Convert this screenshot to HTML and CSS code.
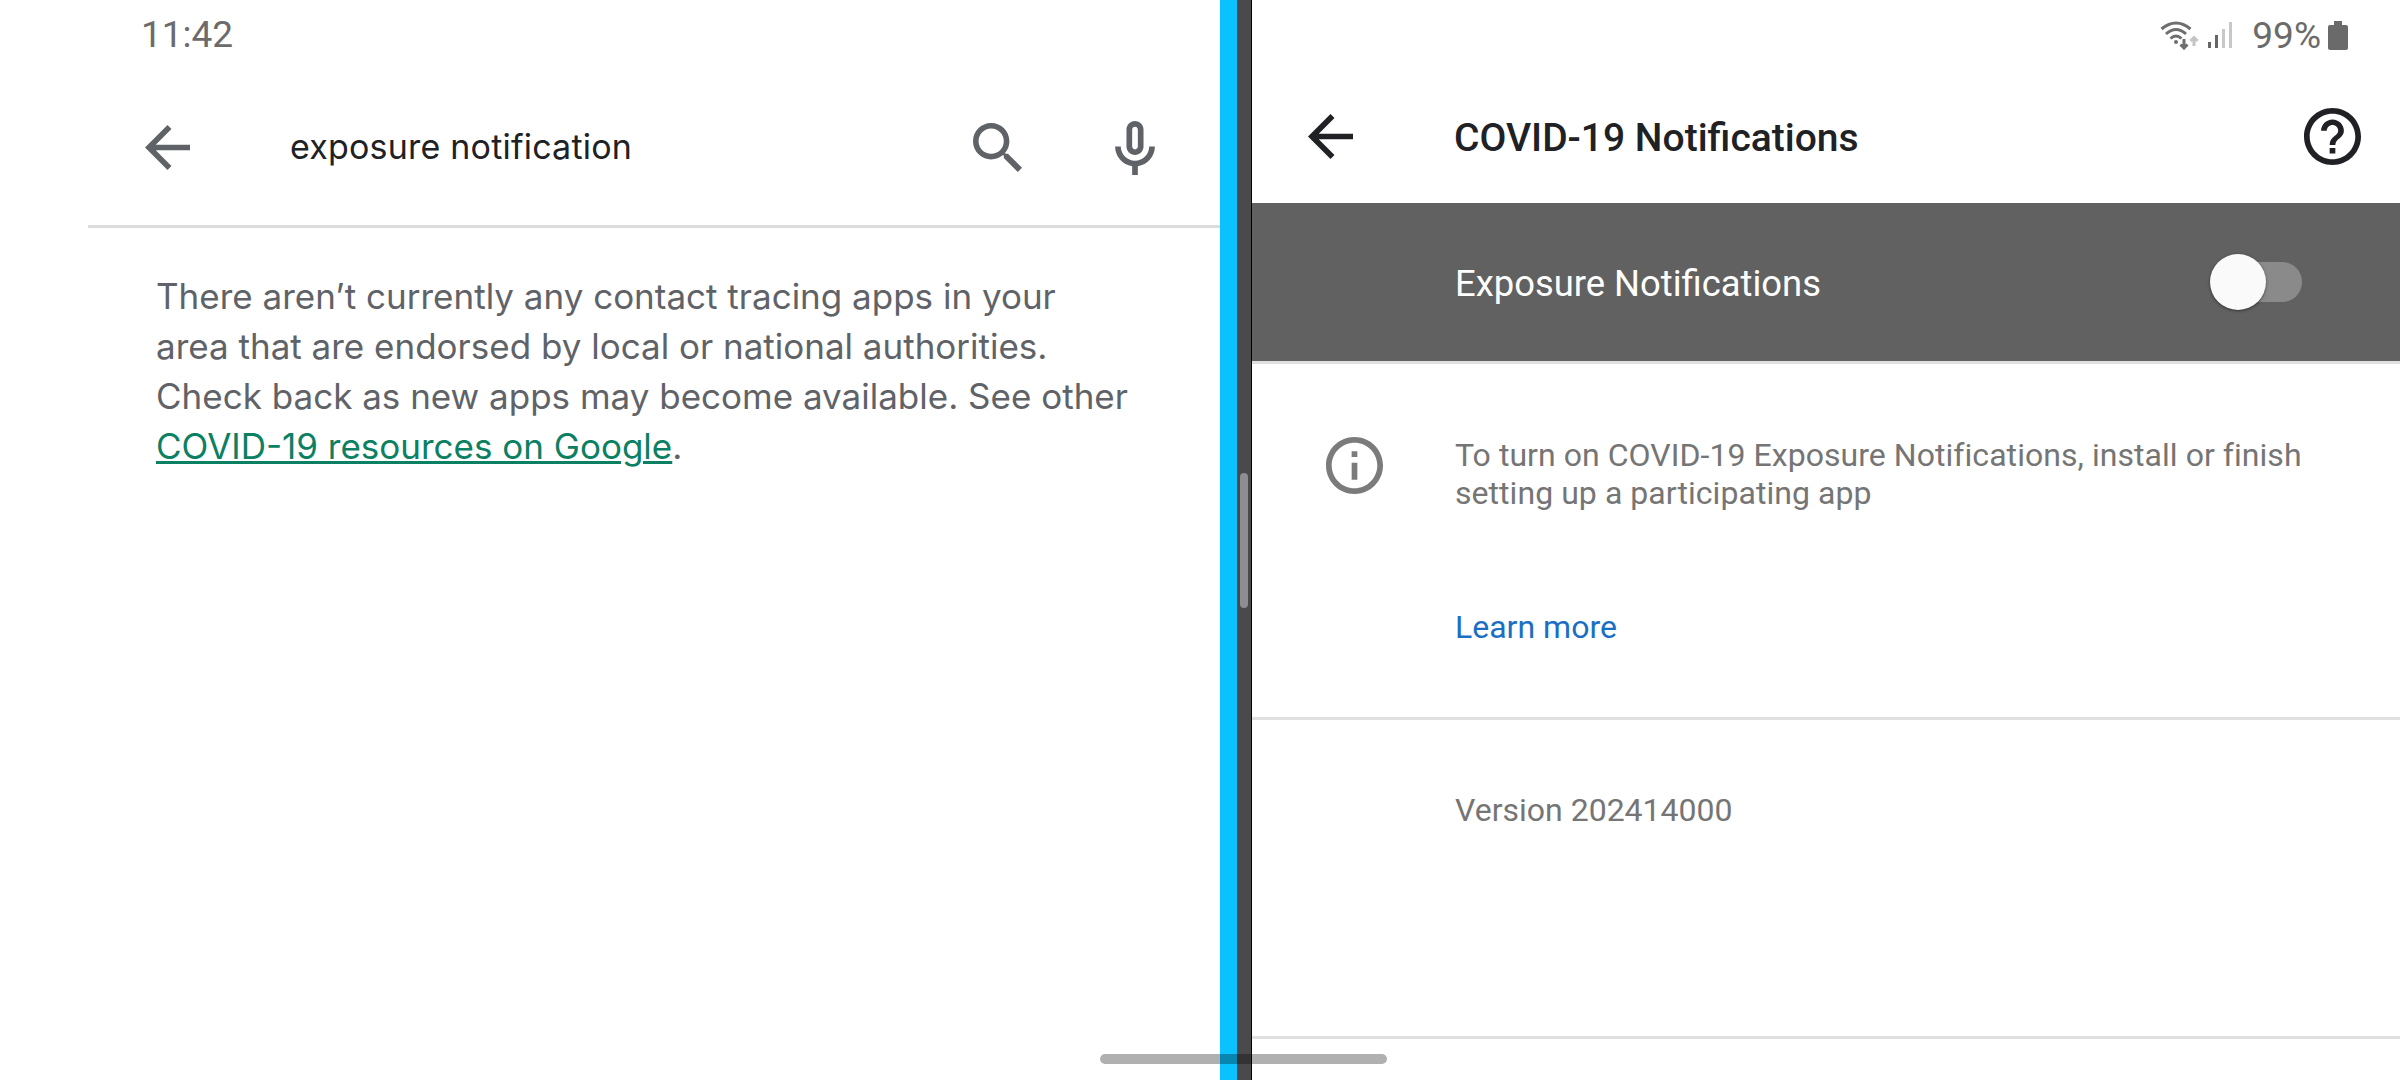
FILE: index.html
```html
<!DOCTYPE html>
<html lang="en">
<head>
  <meta charset="UTF-8" />
  <title>COVID-19 Notifications</title>
  <link rel="stylesheet" href="styles.css">
</head>
<body>

<div class="screen">
  <!-- left window: search -->
  <div class="left-pane">
    <div class="clock">11:42</div>
    <div class="search-bar">
      <svg class="icon-back-grey" viewBox="4 4 16 16"><path d="M20 11H7.83l5.59-5.59L12 4l-8 8 8 8 1.41-1.41L7.83 13H20v-2z"/></svg>
      <span class="search-text">exposure notification</span>
      <svg class="icon-search" viewBox="3 3 17.5 17.5"><path d="M15.5 14h-.79l-.28-.27C15.41 12.59 16 11.11 16 9.5 16 5.91 13.09 3 9.5 3S3 5.91 3 9.5 5.91 16 9.5 16c1.61 0 3.09-.59 4.23-1.57l.27.28v.79l5 4.99L20.49 19l-4.99-5zm-6 0C7.01 14 5 11.99 5 9.5S7.01 5 9.5 5 14 7.01 14 9.5 11.99 14 9.5 14z"/></svg>
      <svg class="icon-mic" viewBox="5 2 14 19"><path d="M12 14c1.66 0 3-1.34 3-3V5c0-1.66-1.34-3-3-3S9 3.34 9 5v6c0 1.66 1.34 3 3 3zm-1-9c0-.55.45-1 1-1s1 .45 1 1v6c0 .55-.45 1-1 1s-1-.45-1-1V5zm6 6c0 2.76-2.24 5-5 5s-5-2.24-5-5H5c0 3.53 2.61 6.43 6 6.92V21h2v-3.08c3.39-.49 6-3.39 6-6.92h-2z"/></svg>
    </div>
    <p class="message">There aren’t currently any contact tracing apps in your<br>area that are endorsed by local or national authorities.<br>Check back as new apps may become available. See other<br><a class="message-link" href="#">COVID-19 resources on Google</a>.</p>
  </div>

  <!-- split screen handle -->
  <div class="stripe"></div>
  <div class="handle"><div class="handle-thumb"></div></div>

  <!-- right window: settings -->
  <div class="right-pane">
    <div class="status-bar">
      <svg class="icon-wifi" viewBox="0 0 40 30">
        <path class="wifi-arc" d="M1.5 9 Q16 -3 30.5 9 M6 14 Q16 5 26 14 M10.5 18.5 Q16 13.5 21.5 18.5"/>
        <circle class="wifi-dot" cx="16" cy="22" r="2"/>
        <path class="wifi-arc" d="M24 19 V27.5 M20.5 24.5 L24 28 L27.5 24.5"/>
        <path class="wifi-up" d="M34 26 V18 M30.5 21 L34 17.5 L37.5 21"/>
      </svg>
      <div class="signal">
        <span class="bar bar-1"></span>
        <span class="bar bar-2"></span>
        <span class="bar bar-3"></span>
        <span class="bar bar-4"></span>
      </div>
      <span class="percent">99%</span>
      <div class="battery"><span class="battery-cap"></span><span class="battery-body"></span></div>
    </div>

    <div class="app-bar">
      <svg class="icon-back" viewBox="4 4 16 16"><path d="M20 11H7.83l5.59-5.59L12 4l-8 8 8 8 1.41-1.41L7.83 13H20v-2z"/></svg>
      <h1 class="app-title">COVID-19 Notifications</h1>
      <svg class="icon-help" viewBox="2 2 20 20"><path d="M11 18h2v-2h-2v2zm1-16C6.48 2 2 6.48 2 12s4.48 10 10 10 10-4.48 10-10S17.52 2 12 2zm0 18c-4.41 0-8-3.59-8-8s3.59-8 8-8 8 3.59 8 8-3.59 8-8 8zm0-14c-2.21 0-4 1.79-4 4h2c0-1.1.9-2 2-2s2 .9 2 2c0 2-3 1.75-3 5h2c0-2.25 3-2.5 3-5 0-2.21-1.79-4-4-4z"/></svg>
    </div>

    <div class="switch-row">
      <span class="switch-label">Exposure Notifications</span>
      <div class="switch"><div class="switch-track"></div><div class="switch-knob"></div></div>
    </div>

    <div class="info-section">
      <svg class="icon-info" viewBox="2 2 20 20"><path d="M11 7h2v2h-2zm0 4h2v6h-2zm1-9C6.48 2 2 6.48 2 12s4.48 10 10 10 10-4.48 10-10S17.52 2 12 2zm0 18c-4.41 0-8-3.59-8-8s3.59-8 8-8 8 3.59 8 8-3.59 8-8 8z"/></svg>
      <div class="info-body">
        <p class="info-text">To turn on COVID-19 Exposure Notifications, install or finish<br>setting up a participating app</p>
        <a class="learn-more" href="#">Learn more</a>
      </div>
    </div>

    <div class="version-section">Version 202414000</div>
  </div>

  <div class="gesture-bar"></div>
</div>

</body>
</html>
```

FILE: styles.css
```css
body {
  margin: 0;
  padding: 0;
  background-color: #fff;
  font-family: 'Roboto', sans-serif;
}

p, h1 {
  margin: 0;
}

svg {
  display: block;
  flex-shrink: 0;
}

.screen {
  position: relative;
  display: flex;
  width: 2400px;
  height: 1080px;
  overflow: hidden;
}

/* left window */
.left-pane {
  width: 1220px;
  flex-shrink: 0;
}

.clock {
  height: 70px;
  padding-left: 141px;
  font-size: 37px;
  line-height: 70px;
  color: #6b6b6b;
}

.search-bar {
  display: flex;
  align-items: center;
  height: 155px;
  margin-left: 88px;
  padding-left: 57px;
  border-bottom: 3px solid #dcdcdc;
}

.icon-back-grey {
  width: 45px;
  height: 45px;
  fill: #5f6368;
}

.search-text {
  width: 683px;
  margin-left: 100px;
  padding-bottom: 2px;
  font-family: 'Inter', sans-serif;
  font-size: 34px;
  letter-spacing: 0.2px;
  color: #202124;
}

.icon-search {
  width: 49px;
  height: 49px;
  fill: #5f6368;
}

.icon-mic {
  width: 40px;
  height: 54px;
  margin-left: 93px;
  fill: #5f6368;
}

.message {
  padding: 43px 0 0 156px;
  font-family: 'Inter', sans-serif;
  font-size: 35px;
  line-height: 50px;
  color: #5f6368;
}

.message-link {
  color: #0b8062;
  text-decoration-thickness: 3px;
}

/* divider between windows */
.stripe {
  width: 17px;
  flex-shrink: 0;
  background-color: #0cc1ff;
}

.handle {
  width: 15px;
  flex-shrink: 0;
  padding: 473px 3px 0;
  box-sizing: border-box;
  background-color: #4a4a4c;
  border-right: 1px solid #000;
}

.handle-thumb {
  width: 8px;
  height: 135px;
  border-radius: 4px;
  background-color: #8e8e92;
}

/* right window */
.right-pane {
  flex: 1;
  min-width: 0;
}

.status-bar {
  display: flex;
  align-items: center;
  height: 70px;
  padding-right: 52px;
  justify-content: flex-end;
}

.icon-wifi {
  width: 40px;
  height: 30px;
}

.wifi-arc {
  fill: none;
  stroke: #6e6e6e;
  stroke-width: 3;
}

.wifi-dot {
  fill: #6e6e6e;
}

.wifi-up {
  fill: none;
  stroke: #c4c4c4;
  stroke-width: 3;
}

.signal {
  display: flex;
  align-items: flex-end;
  gap: 4px;
  height: 26px;
  margin-left: 8px;
}

.bar {
  width: 3px;
  background-color: #666;
}

.bar-1 { height: 6px; }
.bar-2 { height: 13px; }
.bar-3 { height: 19px; background-color: #c8c8c8; }
.bar-4 { height: 26px; background-color: #c8c8c8; }

.percent {
  margin-left: 20px;
  font-size: 37px;
  color: #6b6b6b;
}

.battery {
  display: flex;
  flex-direction: column;
  align-items: center;
  margin-left: 7px;
}

.battery-cap {
  width: 8px;
  height: 4px;
  background-color: #6a6a6a;
}

.battery-body {
  width: 20px;
  height: 25px;
  border-radius: 2px;
  background-color: #6a6a6a;
}

.app-bar {
  display: flex;
  align-items: center;
  height: 133px;
  padding-left: 56px;
}

.icon-back {
  width: 45px;
  height: 45px;
  fill: #202124;
}

.app-title {
  width: 850px;
  margin-left: 101px;
  padding-top: 2px;
  font-size: 39px;
  font-weight: 500;
  color: #202124;
}

.icon-help {
  width: 57px;
  height: 57px;
  fill: #202124;
}

.switch-row {
  display: flex;
  align-items: center;
  justify-content: space-between;
  height: 158px;
  padding: 0 98px 0 203px;
  background-color: #616161;
  border-bottom: 3px solid #e0e0e0;
}

.switch-label {
  padding-top: 2px;
  font-size: 36.4px;
  color: #fff;
}

.switch {
  position: relative;
  width: 92px;
  height: 57px;
}

.switch-track {
  position: absolute;
  top: 8px;
  left: 12px;
  right: 0;
  height: 40px;
  border-radius: 20px;
  background-color: #8a8a8a;
}

.switch-knob {
  position: absolute;
  top: 0;
  left: 0;
  width: 56px;
  height: 56px;
  border-radius: 50%;
  background-color: #fafafa;
  box-shadow: 0 1px 3px rgba(0, 0, 0, 0.5);
}

.info-section {
  display: flex;
  height: 353px;
  padding-left: 74px;
  border-bottom: 3px solid #e0e0e0;
}

.icon-info {
  width: 57px;
  height: 57px;
  margin-top: 73px;
  fill: #7b7b7b;
}

.info-body {
  margin-left: 72px;
  padding-top: 72px;
}

.info-text {
  font-size: 32px;
  letter-spacing: 0.05px;
  line-height: 38px;
  color: #757575;
}

.learn-more {
  display: block;
  margin-top: 96px;
  font-size: 32px;
  line-height: 38px;
  color: #1a6fc4;
  text-decoration: none;
}

.version-section {
  height: 319px;
  padding: 71px 0 0 203px;
  box-sizing: border-box;
  border-bottom: 3px solid #e0e0e0;
  font-size: 32px;
  line-height: 38px;
  color: #757575;
}

/* system gesture pill, lies over the windows */
.gesture-bar {
  position: absolute;
  left: 1100px;
  top: 1054px;
  width: 287px;
  height: 10px;
  border-radius: 5px;
  background-color: rgba(0, 0, 0, 0.31);
}
```
